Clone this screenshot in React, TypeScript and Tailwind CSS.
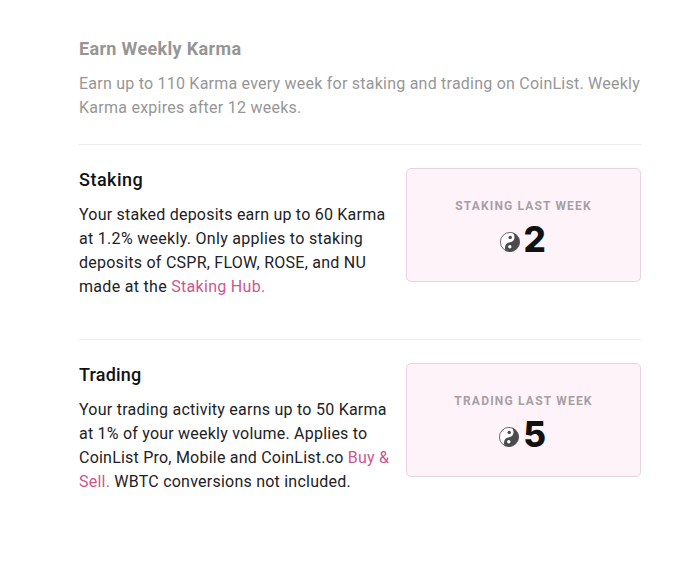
import type { ReactNode } from "react";

function YinYang() {
  return (
    <svg width="20" height="20" viewBox="0 0 20 20" className="mt-[6px] shrink-0" aria-hidden="true">
      <circle cx="10" cy="10" r="9.6" fill="#fff" stroke="#4b494b" strokeWidth="0.8" />
      <path
        d="M12.6 0.8A9.6 9.6 0 1 1 5.4 18.5C4.4 15 5.4 12 8.2 10.8C9.8 10.1 11.6 10.1 12.9 9C15.2 7 15 3.2 12.6 0.8Z"
        fill="#4b494b"
      />
      <circle cx="10.2" cy="5.4" r="1.7" fill="#4b494b" />
      <circle cx="9.8" cy="14.8" r="1.7" fill="#fff" />
    </svg>
  );
}

function Line({ tracking, children }: { tracking: string; children: ReactNode }) {
  return <span className={`block whitespace-nowrap ${tracking}`}>{children}</span>;
}

function KarmaCard({ label, value, tracking }: { label: string; value: number; tracking: string }) {
  return (
    <div className="flex h-[114px] w-[235px] shrink-0 flex-col items-center rounded-[5px] border border-[#e6d5df] bg-[#fdf3f9] pt-[28px]">
      <div className={`text-[12px] leading-[18px] font-bold text-[#a6a0a5] ${tracking}`}>{label}</div>
      <div className="mt-[5px] mr-[2px] flex items-center gap-[4px]">
        <YinYang />
        <span className="font-['Inter'] text-[35px] leading-[38px] font-extrabold tracking-[-0.5px] text-[#111]">{value}</span>
      </div>
    </div>
  );
}

export default function App() {
  return (
    <main className="min-h-[566px] w-[700px] bg-white pt-[37px] pl-[79px] font-['Roboto',sans-serif] text-[16px] leading-6 text-[#222226]">
      <div className="w-[562px]">
        <header className="h-[107px] text-[#969696]">
          <h2 className="text-[18px] leading-6 font-bold tracking-[0.34px]">Earn Weekly Karma</h2>
          <p className="mt-[11px]">
            <Line tracking="tracking-[0.23px]">Earn up to 110 Karma every week for staking and trading on CoinList. Weekly</Line>
            <Line tracking="tracking-[0.26px]">Karma expires after 12 weeks.</Line>
          </p>
        </header>

        <section className="flex h-[195px] justify-between border-t border-[#ececec] pt-[23px]">
          <div>
            <h3 className="text-[18px] leading-6 font-medium tracking-[0.5px] text-[#111]">Staking</h3>
            <p className="mt-[11px]">
              <Line tracking="tracking-[0.22px]">Your staked deposits earn up to 60 Karma</Line>
              <Line tracking="tracking-[0.3px]">at 1.2% weekly. Only applies to staking</Line>
              <Line tracking="tracking-[0.25px]">deposits of CSPR, FLOW, ROSE, and NU</Line>
              <Line tracking="tracking-[0.3px]">
                made at the <a href="#" className="text-[#cf5590]">Staking Hub.</a>
              </Line>
            </p>
          </div>
          <KarmaCard label="STAKING LAST WEEK" value={2} tracking="tracking-[1.15px]" />
        </section>

        <section className="flex justify-between border-t border-[#ececec] pt-[23px]">
          <div>
            <h3 className="text-[18px] leading-6 font-medium tracking-[0.2px] text-[#111]">Trading</h3>
            <p className="mt-[11px]">
              <Line tracking="tracking-[0.25px]">Your trading activity earns up to 50 Karma</Line>
              <Line tracking="tracking-[0.22px]">at 1% of your weekly volume. Applies to</Line>
              <Line tracking="tracking-[0.22px]">
                CoinList Pro, Mobile and CoinList.co <a href="#" className="text-[#cf5590]">Buy &amp;</a>
              </Line>
              <Line tracking="tracking-[0.23px]">
                <a href="#" className="text-[#cf5590]">Sell.</a> WBTC conversions not included.
              </Line>
            </p>
          </div>
          <KarmaCard label="TRADING LAST WEEK" value={5} tracking="tracking-[1.2px]" />
        </section>
      </div>
    </main>
  );
}
